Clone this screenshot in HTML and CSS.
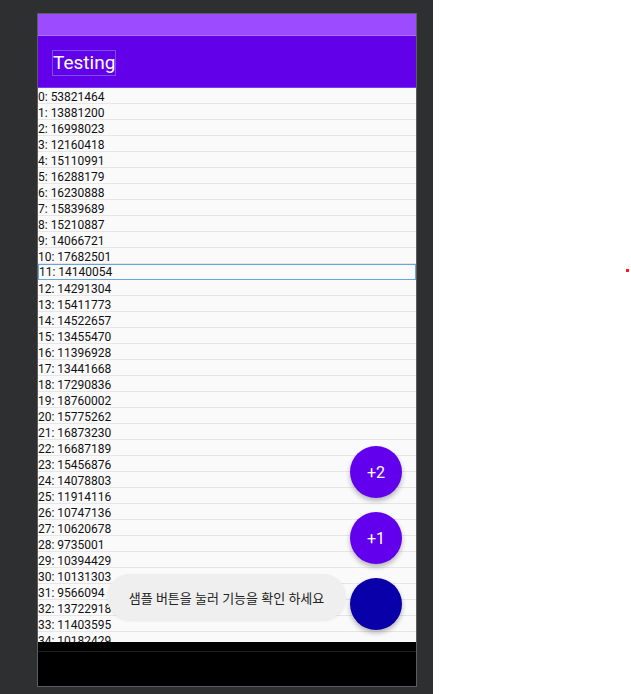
FILE: index.html
```html
<!DOCTYPE html>
<html>
<head>
<meta charset="utf-8">
<link rel="stylesheet" href="styles.css">
</head>
<body>
<div class="page">
  <div class="stage">
    <div class="phone">
      <div class="status"></div>
      <div class="toolbar"><span class="title">Testing</span></div>
      <div class="content">
        <div class="list" id="list"></div>
        <div class="fabs">
          <div class="fab"><span>+2</span></div>
          <div class="fab"><span>+1</span></div>
          <div class="fab dark"></div>
        </div>
        <div class="toast"><span>샘플 버튼을 눌러 기능을 확인 하세요</span></div>
      </div>
      <div class="navbar"></div>
    </div>
  </div>
  <div class="canvas"><div class="dot"></div></div>
</div>
<script>
var vals=[53821464,13881200,16998023,12160418,15110991,16288179,16230888,15839689,15210887,14066721,17682501,14140054,14291304,15411773,14522657,13455470,11396928,13441668,17290836,18760002,15775262,16873230,16687189,15456876,14078803,11914116,10747136,10620678,9735001,10394429,10131303,9566094,13722918,11403595,10182429];
var l=document.getElementById('list');
vals.forEach(function(v,i){var d=document.createElement('div');d.className='row'+(i===11?' sel':'');d.textContent=i+': '+v;l.appendChild(d);});
</script>
</body>
</html>
```
FILE: styles.css
```css
html,body{margin:0;padding:0;}
body{width:631px;height:694px;overflow:hidden;font-family:Roboto,"Noto Sans CJK KR",sans-serif;}
.page{display:flex;height:694px;}
.stage{width:433px;background:#2e2f31;padding:13px 0 0 37px;box-sizing:border-box;}
.canvas{flex:1;background:#fff;position:relative;}
.dot{position:absolute;left:193px;top:269px;width:3px;height:3px;background:#ff1a1a;}
.phone{width:380px;height:674px;border:1px solid #5c5d60;box-sizing:border-box;display:flex;flex-direction:column;background:#fafafa;}
.status{height:22px;background:#9c4bff;border-bottom:1px solid #a872f8;box-sizing:border-box;flex:none;}
.toolbar{height:52px;background:#6200ea;flex:none;display:flex;align-items:center;padding-left:14px;border-bottom:1px solid #7a3cf0;box-sizing:border-box;}
.title{color:#fff;font-size:19px;line-height:24px;padding:0;border:1px solid #7b4ef0;position:relative;top:1px;}
.content{flex:1;position:relative;overflow:hidden;}
.row{height:16px;line-height:16px;padding-top:1px;font-size:12px;color:#111;border-bottom:1px solid #e6e6e6;box-sizing:border-box;white-space:nowrap;}
.row.sel{border:1px solid #6aa4dc;line-height:15px;padding-top:0;}
.fabs{position:absolute;right:14px;top:358px;display:flex;flex-direction:column;gap:14px;}
.fab{width:52px;height:52px;border-radius:50%;background:#6200ee;color:#fff;font-size:16px;display:flex;align-items:center;justify-content:center;box-shadow:0 3px 5px rgba(0,0,0,.28);}
.fab.dark{background:#0a00aa;}
.toast{position:absolute;left:69px;top:486px;width:239px;height:46px;border-radius:23px;background:#efefef;display:flex;align-items:center;justify-content:center;font-size:13px;color:#222;box-shadow:0 1px 3px rgba(0,0,0,.08);}
.navbar{height:44px;flex:none;background:#000;border-top:9px solid #000;box-shadow:inset 0 1px 0 #1e1e1e;box-sizing:border-box;}
```
